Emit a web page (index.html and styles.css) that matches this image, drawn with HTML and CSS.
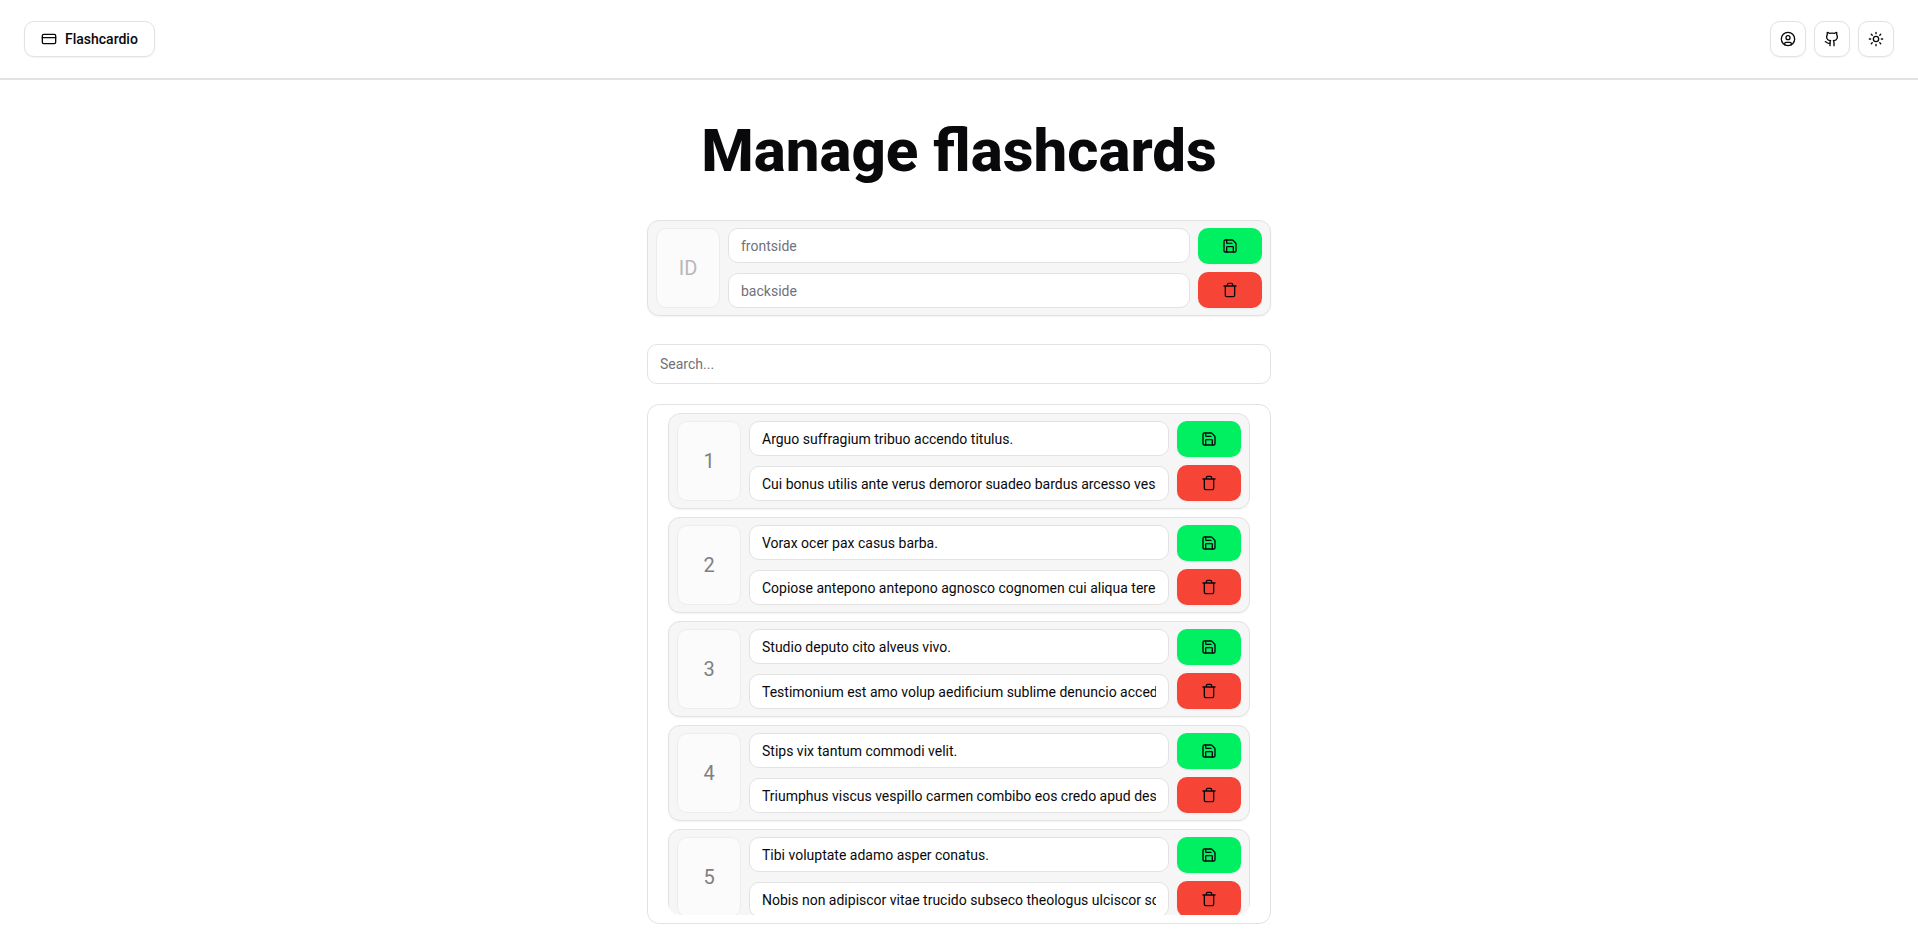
FILE: index.html
```html
<!DOCTYPE html>
<html lang="en">
<head>
<meta charset="utf-8">
<title>Flashcardio</title>
<link rel="stylesheet" href="styles.css">
</head>
<body>
<svg class="sprite" aria-hidden="true">
  <symbol id="save" viewBox="0 0 24 24"><path d="M15.200 3a2 2 0 0 1 1.400.6l3.800 3.800a2 2 0 0 1 .6 1.400V19a2 2 0 0 1-2 2H5a2 2 0 0 1-2-2V5a2 2 0 0 1 2-2z"/><path d="M17 21v-7a1 1 0 0 0-1-1H8a1 1 0 0 0-1 1v7M7 3v4a1 1 0 0 0 1 1h7"/></symbol>
  <symbol id="trash" viewBox="0 0 24 24"><path d="M3 6h18M19 6v14c0 1-1 2-2 2H7c-1 0-2-1-2-2V6M8 6V4c0-1 1-2 2-2h4c1 0 2 1 2 2v2"/></symbol>
</svg>
<header class="topbar">
  <a class="button brand" href="#">
    <svg class="icon" viewBox="0 0 24 24"><rect x="2" y="5" width="20" height="14" rx="2"/><path d="M2 10h20"/></svg>
    Flashcardio
  </a>
  <nav class="actions">
    <button class="button square" aria-label="Account"><svg class="icon" viewBox="0 0 24 24"><circle cx="12" cy="12" r="10"/><circle cx="12" cy="10" r="3"/><path d="M7 20.662V19a2 2 0 0 1 2-2h6a2 2 0 0 1 2 2v1.662"/></svg></button>
    <a class="button square" href="#" aria-label="GitHub"><svg class="icon" viewBox="0 0 24 24"><path d="M15 22v-4a4.800 4.800 0 0 0-1-3.500c3 0 6-2 6-5.500.08-1.250-.27-2.480-1-3.500.28-1.150.28-2.350 0-3.500 0 0-1 0-3 1.500-2.640-.5-5.360-.5-8 0C6 2 5 2 5 2c-.3 1.150-.3 2.350 0 3.500A5.403 5.403 0 0 0 4 9c0 3.500 3 5.500 6 5.500-.39.490-.68 1.050-.85 1.650-.17.600-.22 1.230-.15 1.850v4"/><path d="M9 18c-4.510 2-5-2-7-2"/></svg></a>
    <button class="button square" aria-label="Toggle theme"><svg class="icon" viewBox="0 0 24 24"><circle cx="12" cy="12" r="4"/><path d="M12 2v2M12 20v2M4.930 4.930l1.410 1.410M17.660 17.660l1.410 1.410M2 12h2M20 12h2M6.340 17.660l-1.410 1.410M19.070 4.930l-1.410 1.410"/></svg></button>
  </nav>
</header>
<main class="page">
  <h1 class="title">Manage flashcards</h1>
  <form class="card">
    <div class="card-id card-id-empty">ID</div>
    <div class="fields">
      <input class="field" type="text" placeholder="frontside" aria-label="Front side">
      <input class="field" type="text" placeholder="backside" aria-label="Back side">
    </div>
    <div class="card-actions">
      <button type="button" class="save" aria-label="Save"><svg class="icon"><use href="#save"/></svg></button>
      <button type="button" class="delete" aria-label="Delete"><svg class="icon"><use href="#trash"/></svg></button>
    </div>
  </form>
  <input class="search" type="search" placeholder="Search..." aria-label="Search">
  <section class="list">
    <div class="scroller">
      <form class="card">
        <div class="card-id">1</div>
        <div class="fields">
          <input class="field" type="text" aria-label="Front side" value="Arguo suffragium tribuo accendo titulus.">
          <input class="field" type="text" aria-label="Back side" value="Cui bonus utilis ante verus demoror suadeo bardus arcesso vespillo.">
        </div>
        <div class="card-actions">
          <button type="button" class="save" aria-label="Save"><svg class="icon"><use href="#save"/></svg></button>
          <button type="button" class="delete" aria-label="Delete"><svg class="icon"><use href="#trash"/></svg></button>
        </div>
      </form>
      <form class="card">
        <div class="card-id">2</div>
        <div class="fields">
          <input class="field" type="text" aria-label="Front side" value="Vorax ocer pax casus barba.">
          <input class="field" type="text" aria-label="Back side" value="Copiose antepono antepono agnosco cognomen cui aliqua teres.">
        </div>
        <div class="card-actions">
          <button type="button" class="save" aria-label="Save"><svg class="icon"><use href="#save"/></svg></button>
          <button type="button" class="delete" aria-label="Delete"><svg class="icon"><use href="#trash"/></svg></button>
        </div>
      </form>
      <form class="card">
        <div class="card-id">3</div>
        <div class="fields">
          <input class="field" type="text" aria-label="Front side" value="Studio deputo cito alveus vivo.">
          <input class="field" type="text" aria-label="Back side" value="Testimonium est amo volup aedificium sublime denuncio accedo.">
        </div>
        <div class="card-actions">
          <button type="button" class="save" aria-label="Save"><svg class="icon"><use href="#save"/></svg></button>
          <button type="button" class="delete" aria-label="Delete"><svg class="icon"><use href="#trash"/></svg></button>
        </div>
      </form>
      <form class="card">
        <div class="card-id">4</div>
        <div class="fields">
          <input class="field" type="text" aria-label="Front side" value="Stips vix tantum commodi velit.">
          <input class="field" type="text" aria-label="Back side" value="Triumphus viscus vespillo carmen combibo eos credo apud desino.">
        </div>
        <div class="card-actions">
          <button type="button" class="save" aria-label="Save"><svg class="icon"><use href="#save"/></svg></button>
          <button type="button" class="delete" aria-label="Delete"><svg class="icon"><use href="#trash"/></svg></button>
        </div>
      </form>
      <form class="card">
        <div class="card-id">5</div>
        <div class="fields">
          <input class="field" type="text" aria-label="Front side" value="Tibi voluptate adamo asper conatus.">
          <input class="field" type="text" aria-label="Back side" value="Nobis non adipiscor vitae trucido subseco theologus ulciscor somnus.">
        </div>
        <div class="card-actions">
          <button type="button" class="save" aria-label="Save"><svg class="icon"><use href="#save"/></svg></button>
          <button type="button" class="delete" aria-label="Delete"><svg class="icon"><use href="#trash"/></svg></button>
        </div>
      </form>
    </div>
  </section>
</main>
</body>
</html>
```
FILE: styles.css
```css
* {
  box-sizing: border-box;
}

body {
  display: flex;
  flex-direction: column;
  height: 100vh;
  margin: 0;
  background: #fff;
  color: #09090b;
  font: 14px/20px Roboto, sans-serif;
}

button,
input {
  font: inherit;
  color: inherit;
}

.sprite {
  display: none;
}

.icon {
  width: 16px;
  height: 16px;
  fill: none;
  stroke: currentColor;
  stroke-width: 2;
  stroke-linecap: round;
  stroke-linejoin: round;
}

.topbar {
  display: flex;
  flex: none;
  align-items: center;
  justify-content: space-between;
  height: 80px;
  padding: 0 24px;
  border-bottom: 2px solid #e2e2e2;
}

.actions {
  display: flex;
  gap: 8px;
}

.button {
  display: flex;
  align-items: center;
  justify-content: center;
  gap: 8px;
  height: 36px;
  padding: 0 16px;
  border: 1px solid #e2e2e2;
  border-radius: 10px;
  background: #fff;
  box-shadow: 0 1px 2px rgb(0 0 0 / 5%);
  color: inherit;
  font-weight: 500;
  text-decoration: none;
}

.square {
  width: 36px;
  padding: 0;
}

.page {
  display: flex;
  flex: 1;
  flex-direction: column;
  width: 100%;
  min-height: 0;
  max-width: 624px;
  margin: 0 auto;
  padding: 40px 0 20px;
}

.title {
  margin: 0 0 38px;
  font-size: 60px;
  font-weight: 800;
  line-height: 62px;
  text-align: center;
}

.card {
  display: flex;
  flex: none;
  gap: 8px;
  padding: 7px 8px;
  border: 1px solid #e2e2e2;
  border-radius: 12px;
  background: #f6f6f6;
  box-shadow: 0 1px 2px rgb(0 0 0 / 5%);
}

.card-id {
  display: flex;
  align-items: center;
  justify-content: center;
  width: 64px;
  border: 1px solid #ececec;
  border-radius: 10px;
  background: #fbfbfb;
  color: #808081;
  font-size: 20px;
}

.card-id-empty {
  color: #b8b8ba;
}

.fields {
  display: flex;
  flex: 1;
  flex-direction: column;
  gap: 10px;
  min-width: 0;
}

.field,
.search {
  width: 100%;
  margin: 0;
  padding: 0 12px;
  border: 1px solid #e2e2e2;
  border-radius: 10px;
  outline: 0;
  background: #fff;
  appearance: none;
}

.field {
  height: 35px;
}

.search {
  flex: none;
  height: 40px;
  margin: 28px 0 20px;
}

.field::placeholder,
.search::placeholder {
  color: #71717a;
  opacity: 1;
}

.card-actions {
  display: flex;
  flex-direction: column;
  gap: 8px;
}

.save,
.delete {
  display: flex;
  align-items: center;
  justify-content: center;
  width: 64px;
  height: 36px;
  padding: 0;
  border: 0;
  border-radius: 10px;
  box-shadow: 0 1px 2px rgb(0 0 0 / 5%);
}

.save {
  background: #00f062;
}

.delete {
  background: #f64437;
}

.list {
  display: flex;
  flex: 1;
  min-height: 0;
  padding: 8px 20px;
  border: 1px solid #e2e2e2;
  border-radius: 12px;
}

.scroller {
  display: flex;
  flex: 1;
  flex-direction: column;
  gap: 8px;
  overflow-y: auto;
  border-radius: 12px;
  scrollbar-width: none;
}
```
